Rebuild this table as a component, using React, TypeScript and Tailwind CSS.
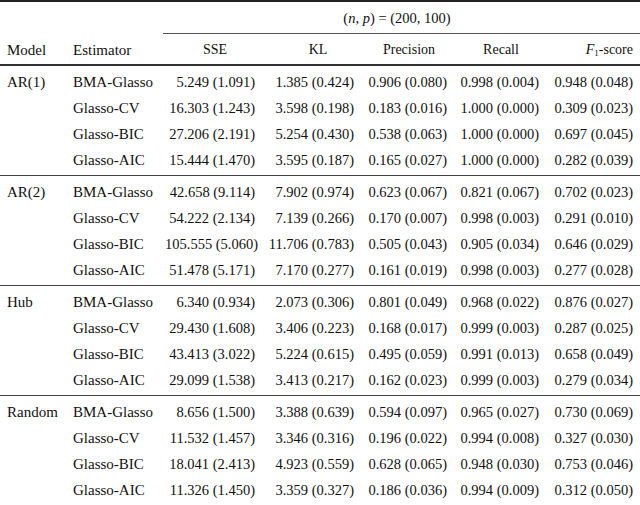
const groups = [
  {
    model: 'AR(1)',
    rows: [
      ['BMA-Glasso', '5.249 (1.091)', '1.385 (0.424)', '0.906 (0.080)', '0.998 (0.004)', '0.948 (0.048)'],
      ['Glasso-CV', '16.303 (1.243)', '3.598 (0.198)', '0.183 (0.016)', '1.000 (0.000)', '0.309 (0.023)'],
      ['Glasso-BIC', '27.206 (2.191)', '5.254 (0.430)', '0.538 (0.063)', '1.000 (0.000)', '0.697 (0.045)'],
      ['Glasso-AIC', '15.444 (1.470)', '3.595 (0.187)', '0.165 (0.027)', '1.000 (0.000)', '0.282 (0.039)'],
    ],
  },
  {
    model: 'AR(2)',
    rows: [
      ['BMA-Glasso', '42.658 (9.114)', '7.902 (0.974)', '0.623 (0.067)', '0.821 (0.067)', '0.702 (0.023)'],
      ['Glasso-CV', '54.222 (2.134)', '7.139 (0.266)', '0.170 (0.007)', '0.998 (0.003)', '0.291 (0.010)'],
      ['Glasso-BIC', '105.555 (5.060)', '11.706 (0.783)', '0.505 (0.043)', '0.905 (0.034)', '0.646 (0.029)'],
      ['Glasso-AIC', '51.478 (5.171)', '7.170 (0.277)', '0.161 (0.019)', '0.998 (0.003)', '0.277 (0.028)'],
    ],
  },
  {
    model: 'Hub',
    rows: [
      ['BMA-Glasso', '6.340 (0.934)', '2.073 (0.306)', '0.801 (0.049)', '0.968 (0.022)', '0.876 (0.027)'],
      ['Glasso-CV', '29.430 (1.608)', '3.406 (0.223)', '0.168 (0.017)', '0.999 (0.003)', '0.287 (0.025)'],
      ['Glasso-BIC', '43.413 (3.022)', '5.224 (0.615)', '0.495 (0.059)', '0.991 (0.013)', '0.658 (0.049)'],
      ['Glasso-AIC', '29.099 (1.538)', '3.413 (0.217)', '0.162 (0.023)', '0.999 (0.003)', '0.279 (0.034)'],
    ],
  },
  {
    model: 'Random',
    rows: [
      ['BMA-Glasso', '8.656 (1.500)', '3.388 (0.639)', '0.594 (0.097)', '0.965 (0.027)', '0.730 (0.069)'],
      ['Glasso-CV', '11.532 (1.457)', '3.346 (0.316)', '0.196 (0.022)', '0.994 (0.008)', '0.327 (0.030)'],
      ['Glasso-BIC', '18.041 (2.413)', '4.923 (0.559)', '0.628 (0.065)', '0.948 (0.030)', '0.753 (0.046)'],
      ['Glasso-AIC', '11.326 (1.450)', '3.359 (0.327)', '0.186 (0.036)', '0.994 (0.009)', '0.312 (0.050)'],
    ],
  },
];

// right edges of the numeric columns: 255, 354, 447, 539, 633
const numCols = ['w-[90px]', 'w-[99px]', 'w-[93px]', 'w-[92px]', 'w-[94px]'];

const App = () => {
  return (
    <div className="w-[640px] h-[505px] bg-white text-[#111] text-[14px] leading-none font-['Liberation_Serif',serif] overflow-hidden">
      <div className="h-[2px] bg-[#222]" />
      {/* spanning header */}
      <div className="flex h-[31px]">
        <div className="w-[163px]" />
        <div className="flex-1 flex items-center justify-center pr-[9px] pt-[1px]">
          <span className="text-[14.5px]">
            (<i>n</i>, <i>p</i>) = (200, 100)
          </span>
        </div>
      </div>
      <div className="flex">
        <div className="w-[163px]" />
        <div className="flex-1 h-px bg-[#555]" />
      </div>
      {/* column header */}
      <div className="flex h-[30px] items-center pt-[2px]">
        <div className="w-[73px] pl-[7px] text-[15px]">Model</div>
        <div className="w-[92px] text-[15px]">Estimator</div>
        <div className={`${numCols[0]} pl-[10px] text-center`}>SSE</div>
        <div className={`${numCols[1]} pl-[27px] text-center`}>KL</div>
        <div className={`${numCols[2]} pl-[17px] text-center`}>Precision</div>
        <div className={`${numCols[3]} pl-[16px] text-center`}>Recall</div>
        <div className={`${numCols[4]} text-right`}>
          <i>F</i>
          <sub className="text-[9px]">1</sub>-score
        </div>
      </div>
      <div className="h-[2px] bg-[#333]" />
      {groups.map((g, gi) => (
        <div key={g.model}>
          <div className="pt-[3px] pb-[2px]">
            {g.rows.map((r, ri) => (
              <div key={r[0]} className="flex h-[26px] items-center pt-[1px]">
                <div className="w-[73px] pl-[7px] text-[15px]">{ri === 0 ? g.model : ''}</div>
                <div className="w-[92px] text-[15px]">{r[0]}</div>
                {r.slice(1).map((v, ci) => (
                  <div key={ci} className={`${numCols[ci]} text-right whitespace-nowrap text-[14.5px]`}>
                    {v}
                  </div>
                ))}
              </div>
            ))}
          </div>
          {gi < groups.length - 1 ? (
            <div className="h-px bg-[#444]" />
          ) : (
            <div className="h-[2px] bg-[#222]" />
          )}
        </div>
      ))}
    </div>
  );
};

export default App;
